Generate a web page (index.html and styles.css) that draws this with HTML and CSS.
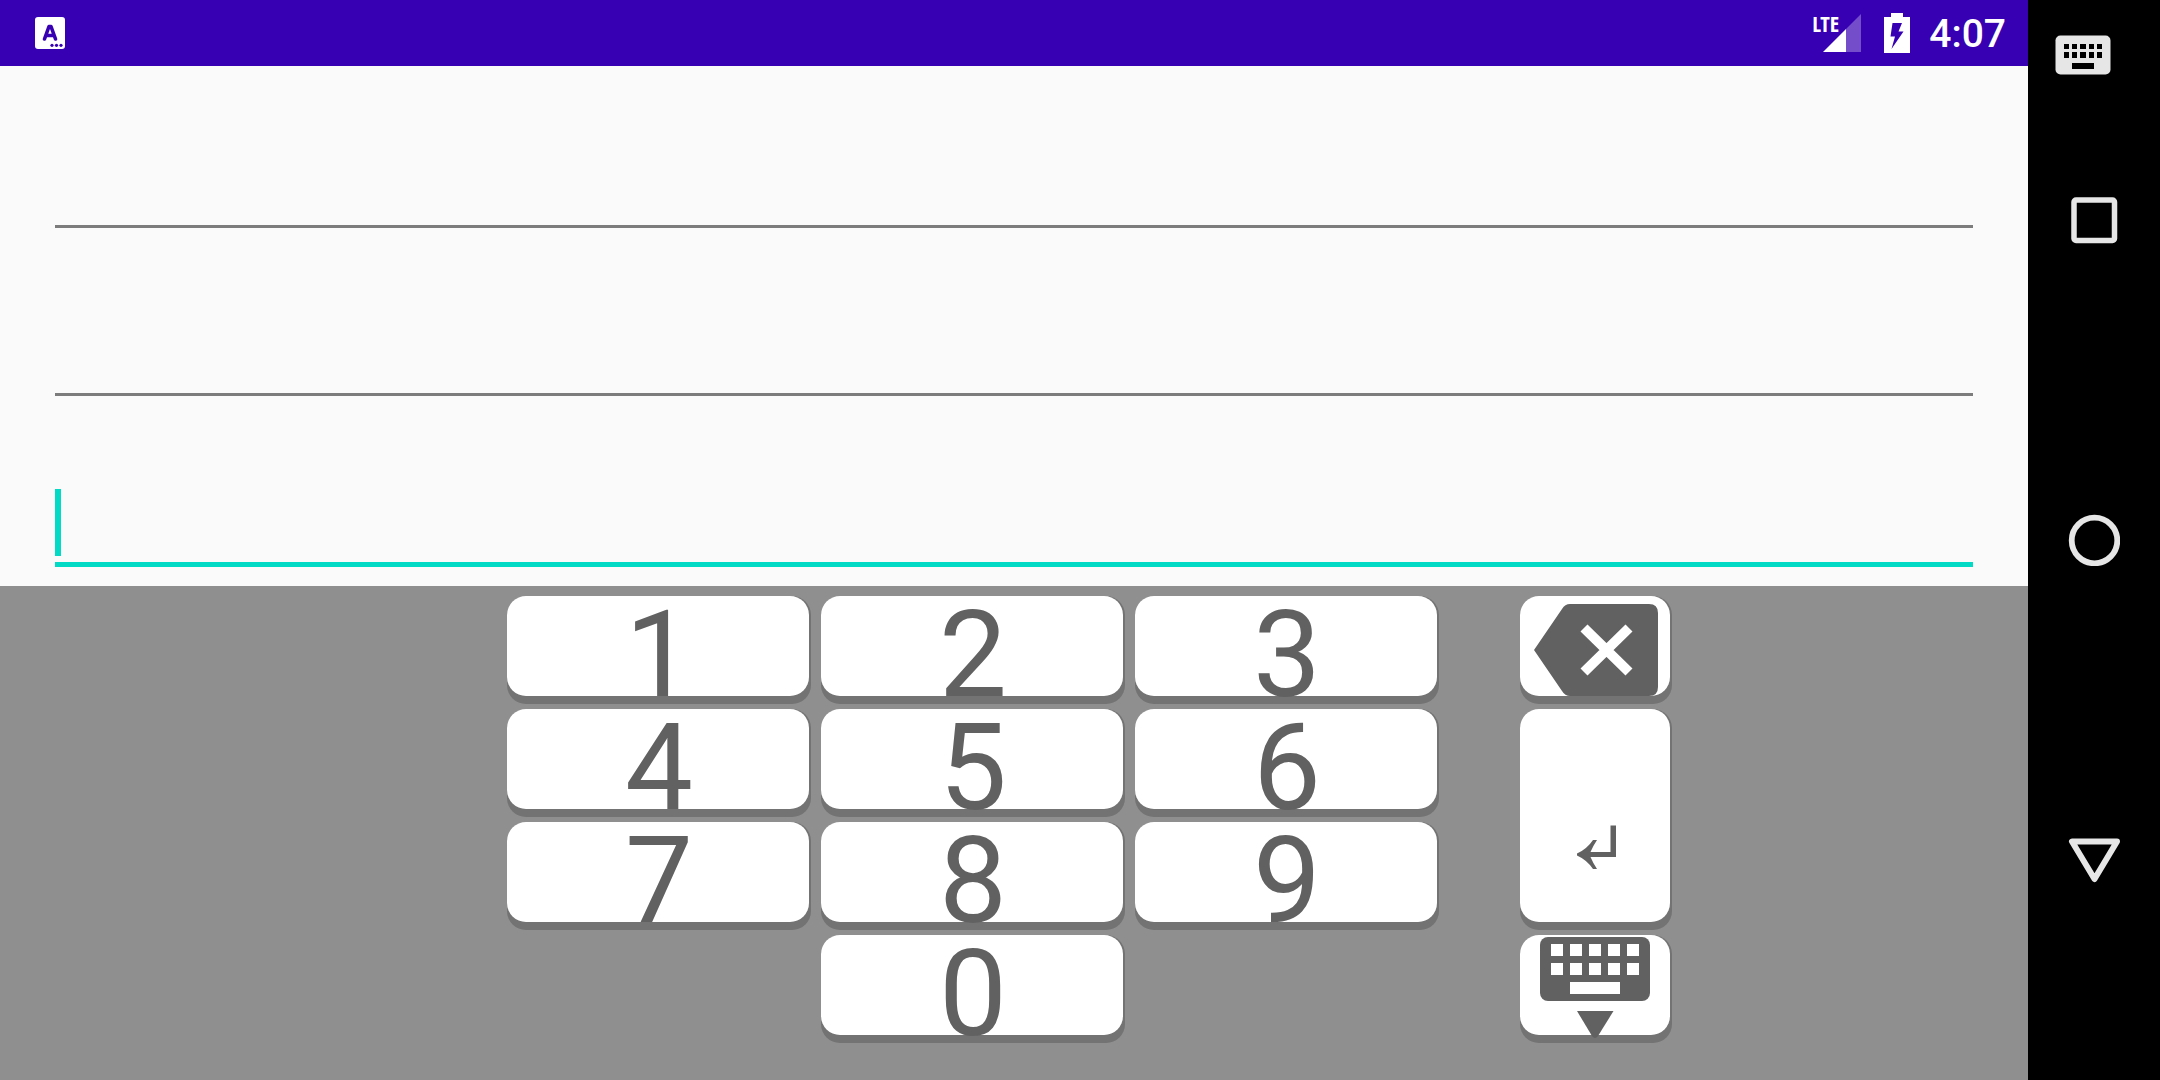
FILE: index.html
```html
<!DOCTYPE html>
<html lang="en">
<head>
<meta charset="utf-8">
<title>Number entry</title>
<link rel="stylesheet" href="styles.css">
</head>
<body>
<div class="device">
  <div class="screen">
    <header class="status">
      <svg class="status-app" viewBox="0 0 30 32" aria-hidden="true">
        <rect width="30" height="32" rx="3" fill="#fff"/>
        <path d="M9.500 22L14 9.500h2L20.500 22M11 18.500h8" fill="none" stroke="#3700b3" stroke-width="3.600" stroke-linecap="round" stroke-linejoin="round"/>
        <g fill="#3700b3"><circle cx="17" cy="28.300" r="1.600"/><circle cx="21.500" cy="28.300" r="1.600"/><circle cx="26" cy="28.300" r="1.600"/></g>
      </svg>
      <div class="status-right">
        <div class="signal">
          <svg class="signal-icon" viewBox="0 0 38 38" aria-hidden="true">
            <path d="M38 0V38H23V15z" fill="#fff" fill-opacity=".3"/>
            <path d="M0 38L23 15V38z" fill="#fff"/>
          </svg>
          <span class="signal-label">LTE</span>
        </div>
        <svg class="battery" viewBox="0 0 26 40" aria-hidden="true">
          <path d="M7 0H19V4H26V40H0V4H7z" fill="#fff"/>
          <path d="M8.500 10H18L14.500 18.500H19.500L7.500 36L11 23.500H6.500z" fill="#3700b3"/>
        </svg>
        <time class="clock">4:07</time>
      </div>
    </header>
    <main class="form">
      <div class="field"><input class="field-input" type="text" inputmode="numeric" aria-label="First number"></div>
      <div class="field"><input class="field-input" type="text" inputmode="numeric" aria-label="Second number"></div>
      <div class="field field-active"><input class="field-input" type="text" inputmode="numeric" aria-label="Third number"></div>
    </main>
    <section class="keyboard" aria-label="Number keyboard">
      <div class="digits">
        <button class="key"><span class="cap">1</span></button>
        <button class="key"><span class="cap">2</span></button>
        <button class="key"><span class="cap">3</span></button>
        <button class="key"><span class="cap">4</span></button>
        <button class="key"><span class="cap">5</span></button>
        <button class="key"><span class="cap">6</span></button>
        <button class="key"><span class="cap">7</span></button>
        <button class="key"><span class="cap">8</span></button>
        <button class="key"><span class="cap">9</span></button>
        <button class="key key-zero"><span class="cap">0</span></button>
      </div>
      <div class="actions">
        <button class="key" aria-label="Delete"><span class="cap">
          <svg class="key-icon" viewBox="0 0 150 100">
            <path d="M14 54L42 13Q45 8 50 8H129Q138 8 138 17V91Q138 100 129 100H50Q45 100 42 95z" fill="#616161"/>
            <path d="M64 32L109 76M109 32L64 76" stroke="#fff" stroke-width="10"/>
          </svg></span></button>
        <button class="key key-enter" aria-label="Enter"><span class="cap">
          <svg class="key-icon" viewBox="0 0 150 213">
            <path d="M90.500 116.500H96V148H70.500Q73 154 77 160H73Q67 151 57 146.500V144.500Q67 140 73 131H77Q73 137 70.500 143H90.500z" fill="#616161"/>
          </svg></span></button>
        <button class="key" aria-label="Hide keyboard"><span class="cap">
          <svg class="key-icon" viewBox="0 0 150 100">
            <rect x="20" y="2" width="110" height="64" rx="8" fill="#616161"/>
            <path d="M31 9h12v12h-12zM50 9h12v12h-12zM69 9h12v12h-12zM88 9h12v12h-12zM107 9h12v12h-12zM31 28h12v12h-12zM50 28h12v12h-12zM69 28h12v12h-12zM88 28h12v12h-12zM107 28h12v12h-12zM50 47h50v12h-50z" fill="#fff"/>
            <path d="M57 76H93.500L78 101Q75 105 72 101z" fill="#616161"/>
          </svg></span></button>
      </div>
    </section>
  </div>
  <nav class="navbar" aria-label="System navigation">
    <button class="nav-button nav-keyboard" aria-label="Switch keyboard">
      <svg class="nav-icon" viewBox="0 0 56 40">
        <rect x=".500" y=".500" width="55" height="39" rx="5" fill="#e6e6e6"/>
        <path d="M9 9h5v5h-5zM17 9h5v5h-5zM25 9h6v5h-6zM34 9h5v5h-5zM42 9h5v5h-5zM9 17h5v6h-5zM17 17h5v6h-5zM25 17h6v6h-6zM34 17h5v6h-5zM42 17h5v6h-5zM17 28h22v6h-22z" fill="#000"/>
      </svg>
    </button>
    <button class="nav-button" aria-label="Recent apps">
      <svg class="nav-glyph" viewBox="0 0 52 52"><rect x="6" y="6" width="40.500" height="40.500" rx="2" fill="none" stroke="#e6e6e6" stroke-width="5.500"/></svg>
    </button>
    <button class="nav-button" aria-label="Home">
      <svg class="nav-glyph" viewBox="0 0 52 52"><circle cx="26.500" cy="26.500" r="22.800" fill="none" stroke="#e6e6e6" stroke-width="5.800"/></svg>
    </button>
    <button class="nav-button" aria-label="Back">
      <svg class="nav-glyph" viewBox="0 0 52 52"><path d="M4 7.500H49L26.500 45z" fill="none" stroke="#e6e6e6" stroke-width="6" stroke-linejoin="round"/></svg>
    </button>
  </nav>
</div>
</body>
</html>
```
FILE: styles.css
```css
* { box-sizing: border-box; }
body { margin: 0; background: #000; font-family: Roboto, sans-serif; }
button { margin: 0; padding: 0; border: 0; background: none; font: inherit; color: inherit; }
svg { display: block; }

.device { display: flex; min-height: 100vh; }
.screen { flex: 1; display: flex; flex-direction: column; background: #fafafa; }

.status { display: flex; align-items: center; justify-content: space-between; height: 66px; padding: 0 22px 0 35px; background: #3700b3; color: #fff; }
.status-app { width: 30px; height: 32px; }
.status-right { display: flex; align-items: center; }
.signal { position: relative; padding-left: 10px; margin-right: 23px; }
.signal-icon { width: 38px; height: 38px; }
.signal-label { position: absolute; left: -1px; top: -2px; font: bold 22px/22px "Liberation Sans Narrow", "Open Sans Condensed", Roboto, sans-serif; }
.battery { width: 26px; height: 40px; margin-right: 19px; }
.clock { padding-top: 2px; font-size: 39px; line-height: 46px; font-weight: 500; }

.form { flex: 1; padding: 0 55px; }
.field { position: relative; padding-top: 87px; height: 168px; }
.field-input { display: block; width: 100%; height: 75px; padding: 0; border: 0; border-bottom: 3px solid #7c7c7c; border-radius: 0; outline: 0; background: none; font: 50px/64px Roboto, sans-serif; color: #212121; }
.field-active .field-input { height: 78px; border-bottom: 5px solid #03dac5; }
.field-active::before { content: ""; position: absolute; left: 0; top: 87px; width: 6px; height: 67px; background: #03dac5; }

.keyboard { display: grid; grid-template-columns: 507fr 932fr 81fr 152fr 356fr; align-items: start; padding: 10px 0 37px; background: #8f8f8f; }
.digits { grid-column: 2; display: grid; grid-template-columns: repeat(3, 1fr); gap: 5px 10px; }
.actions { grid-column: 4; display: grid; gap: 5px; }
.key { display: flex; height: 108px; padding: 0 2px 8px 0; border-radius: 19px; background: #737373; color: #616161; }
.key-zero { grid-column: 2; }
.key-enter { height: 221px; }
.cap { display: flex; align-items: center; justify-content: center; width: 100%; height: 100%; padding: 17px 0 0 2px; border-radius: 19px; background: #fff; font-size: 121px; line-height: 100px; }
.actions .cap { padding: 0; }
.key-icon { width: 100%; height: 100%; overflow: visible; }

.navbar { display: flex; flex-direction: column; justify-content: space-around; position: relative; width: 132px; padding: 60px 0; background: #000; }
.nav-button { display: flex; justify-content: center; }
.nav-keyboard { position: absolute; left: 27px; top: 35px; }
.nav-icon { width: 56px; height: 40px; }
.nav-glyph { width: 52px; height: 52px; }
```
